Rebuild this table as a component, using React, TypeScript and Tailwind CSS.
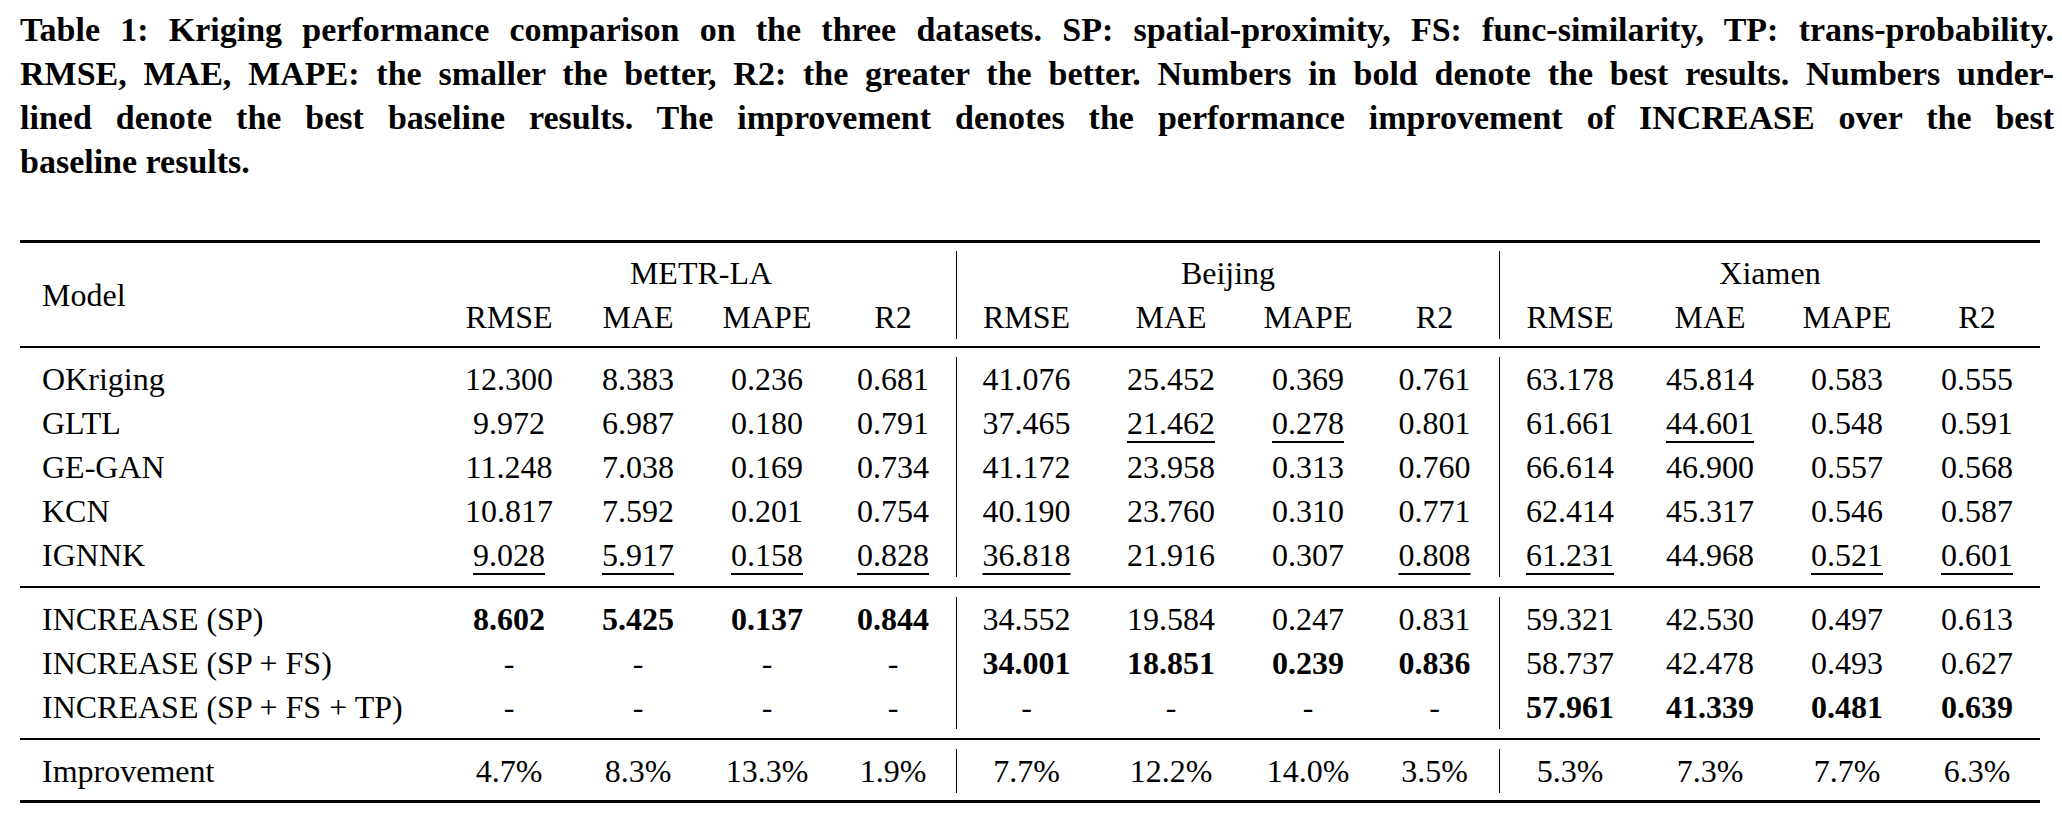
import React from 'react'

// column widths follow the LaTeX table: model | METR-LA x4 | Beijing x4 | Xiamen x4
const gridCols =
  'grid grid-cols-[426px_126px_132px_126px_126px_140px_150px_124px_129px_141px_140px_134px_126px]'

const metrics = ['RMSE', 'MAE', 'MAPE', 'R2']

// "*" = bold (best result), "_" = underlined (best baseline)
const baselines: [string, string[]][] = [
  ['OKriging', ['12.300', '8.383', '0.236', '0.681', '41.076', '25.452', '0.369', '0.761', '63.178', '45.814', '0.583', '0.555']],
  ['GLTL', ['9.972', '6.987', '0.180', '0.791', '37.465', '_21.462', '_0.278', '0.801', '61.661', '_44.601', '0.548', '0.591']],
  ['GE-GAN', ['11.248', '7.038', '0.169', '0.734', '41.172', '23.958', '0.313', '0.760', '66.614', '46.900', '0.557', '0.568']],
  ['KCN', ['10.817', '7.592', '0.201', '0.754', '40.190', '23.760', '0.310', '0.771', '62.414', '45.317', '0.546', '0.587']],
  ['IGNNK', ['_9.028', '_5.917', '_0.158', '_0.828', '_36.818', '21.916', '0.307', '_0.808', '_61.231', '44.968', '_0.521', '_0.601']],
]

const ours: [string, string[]][] = [
  ['INCREASE (SP)', ['*8.602', '*5.425', '*0.137', '*0.844', '34.552', '19.584', '0.247', '0.831', '59.321', '42.530', '0.497', '0.613']],
  ['INCREASE (SP + FS)', ['-', '-', '-', '-', '*34.001', '*18.851', '*0.239', '*0.836', '58.737', '42.478', '0.493', '0.627']],
  ['INCREASE (SP + FS + TP)', ['-', '-', '-', '-', '-', '-', '-', '-', '*57.961', '*41.339', '*0.481', '*0.639']],
]

const improvement = ['4.7%', '8.3%', '13.3%', '1.9%', '7.7%', '12.2%', '14.0%', '3.5%', '5.3%', '7.3%', '7.7%', '6.3%']

function Value({ raw }: { raw: string }) {
  if (raw.startsWith('*')) return <span className="font-bold">{raw.slice(1)}</span>
  if (raw.startsWith('_'))
    return (
      <span className="underline decoration-[1.5px] underline-offset-[7px] [text-decoration-skip-ink:none]">
        {raw.slice(1)}
      </span>
    )
  return <span>{raw}</span>
}

function Row({ name, values }: { name: string; values: string[] }) {
  return (
    <div className={`${gridCols} h-[44px] leading-[44px]`}>
      <div className="pl-[22px] whitespace-nowrap">{name}</div>
      {values.map((v, i) => (
        <div key={i} className={`text-center ${i === 4 || i === 8 ? 'border-l border-black' : ''}`}>
          <Value raw={v} />
        </div>
      ))}
    </div>
  )
}

export default function App() {
  return (
    <div className="w-[2062px] h-[816px] bg-white text-black overflow-hidden [font-family:Liberation_Serif,serif]">
      {/* caption */}
      <div className="ml-[20px] w-[2034px] pt-[8px] text-[34px] leading-[44px] font-bold">
        <div className="text-justify [text-align-last:justify] whitespace-nowrap">
          Table 1: Kriging performance comparison on the three datasets. SP: spatial-proximity, FS: func-similarity, TP: trans-probability.
        </div>
        <div className="text-justify [text-align-last:justify] whitespace-nowrap">
          RMSE, MAE, MAPE: the smaller the better, R2: the greater the better. Numbers in bold denote the best results. Numbers under-
        </div>
        <div className="text-justify [text-align-last:justify] whitespace-nowrap">
          lined denote the best baseline results. The improvement denotes the performance improvement of INCREASE over the best
        </div>
        <div>baseline results.</div>
      </div>

      {/* table */}
      <div className="ml-[20px] w-[2020px] mt-[56px] text-[32px]">
        <div className="h-[3px] bg-black" />

        <div className="pt-[8px] pb-[7px]">
          <div className={`${gridCols} grid-rows-[44px_44px] leading-[44px]`}>
            <div className="row-span-2 pl-[22px] flex items-center">Model</div>
            <div className="col-span-4 text-center">METR-LA</div>
            <div className="col-span-4 text-center border-l border-black">Beijing</div>
            <div className="col-span-4 text-center border-l border-black">Xiamen</div>
            {[0, 1, 2].map(g =>
              metrics.map((m, j) => (
                <div key={`${g}-${m}`} className={`text-center ${g > 0 && j === 0 ? 'border-l border-black' : ''}`}>
                  {m}
                </div>
              ))
            )}
          </div>
        </div>

        <div className="h-[2px] bg-black" />

        <div className="py-[9px]">
          {baselines.map(([name, values]) => (
            <Row key={name} name={name} values={values} />
          ))}
        </div>

        <div className="h-[2px] bg-black" />

        <div className="py-[9px]">
          {ours.map(([name, values]) => (
            <Row key={name} name={name} values={values} />
          ))}
        </div>

        <div className="h-[2px] bg-black" />

        <div className="pt-[9px] pb-[7px]">
          <Row name="Improvement" values={improvement} />
        </div>

        <div className="h-[3px] bg-black" />
      </div>
    </div>
  )
}
